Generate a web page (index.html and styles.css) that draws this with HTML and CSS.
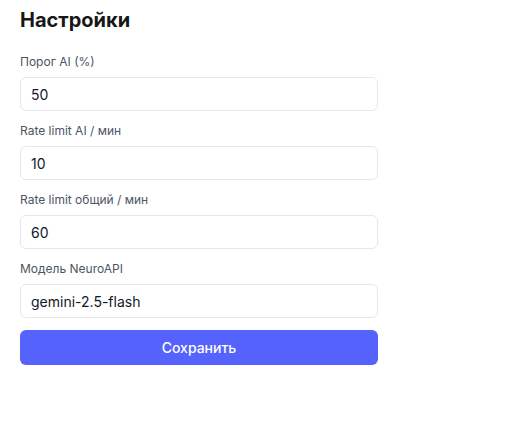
FILE: index.html
```html
<!DOCTYPE html>
<html lang="ru">

<head>
    <meta charset="UTF-8">
    <meta name="viewport" content="width=device-width, initial-scale=1.0">
    <title>Настройки</title>
    <link rel="stylesheet" href="styles.css">
</head>

<body>
    <div class="settings">
        <h2>Настройки</h2>
        <form class="settings-form" onsubmit="event.preventDefault();">
            <div class="field">
                <label for="threshold" class="form-label">Порог AI (%)</label>
                <input type="text" id="threshold" name="threshold" value="50">
            </div>
            <div class="field">
                <label for="rate-ai" class="form-label">Rate limit AI / мин</label>
                <input type="text" id="rate-ai" name="rate-ai" value="10">
            </div>
            <div class="field">
                <label for="rate-all" class="form-label">Rate limit общий / мин</label>
                <input type="text" id="rate-all" name="rate-all" value="60">
            </div>
            <div class="field">
                <label for="model" class="form-label">Модель NeuroAPI</label>
                <input type="text" id="model" name="model" value="gemini-2.5-flash">
            </div>
            <button type="submit">Сохранить</button>
        </form>
    </div>
</body>

</html>
```

FILE: styles.css
```css
:root {
    --primary-color: #5562fb;
    --text-color: #111827;
    --label-color: #4b5563;
    --border-color: #e5e7eb;
    --font-family: 'Inter', 'Noto Sans', sans-serif;
}

body {
    font-family: var(--font-family);
    margin: 0;
    padding: 0;
    background-color: #fff;
    color: var(--text-color);
}

.settings {
    max-width: 358px;
    padding: 8px 20px;
}

h2 {
    margin: 0 0 22px;
    font-size: 20px;
    line-height: 24px;
    font-weight: 700;
    color: #171717;
}

.field {
    margin-bottom: 12px;
}

.form-label {
    display: block;
    font-size: 12px;
    line-height: 15px;
    margin-bottom: 8px;
    color: var(--label-color);
}

input[type="text"] {
    display: block;
    width: 100%;
    height: 34px;
    padding: 0 10px;
    border: 1px solid var(--border-color);
    border-radius: 6px;
    font-family: var(--font-family);
    font-size: 14px;
    color: var(--text-color);
    box-sizing: border-box;
    outline: none;
}

input[type="text"]:focus {
    border-color: var(--primary-color);
}

button[type="submit"] {
    display: block;
    width: 100%;
    height: 35px;
    background-color: var(--primary-color);
    color: white;
    border: none;
    border-radius: 6px;
    font-family: var(--font-family);
    font-size: 14px;
    font-weight: 500;
    cursor: pointer;
}
```
